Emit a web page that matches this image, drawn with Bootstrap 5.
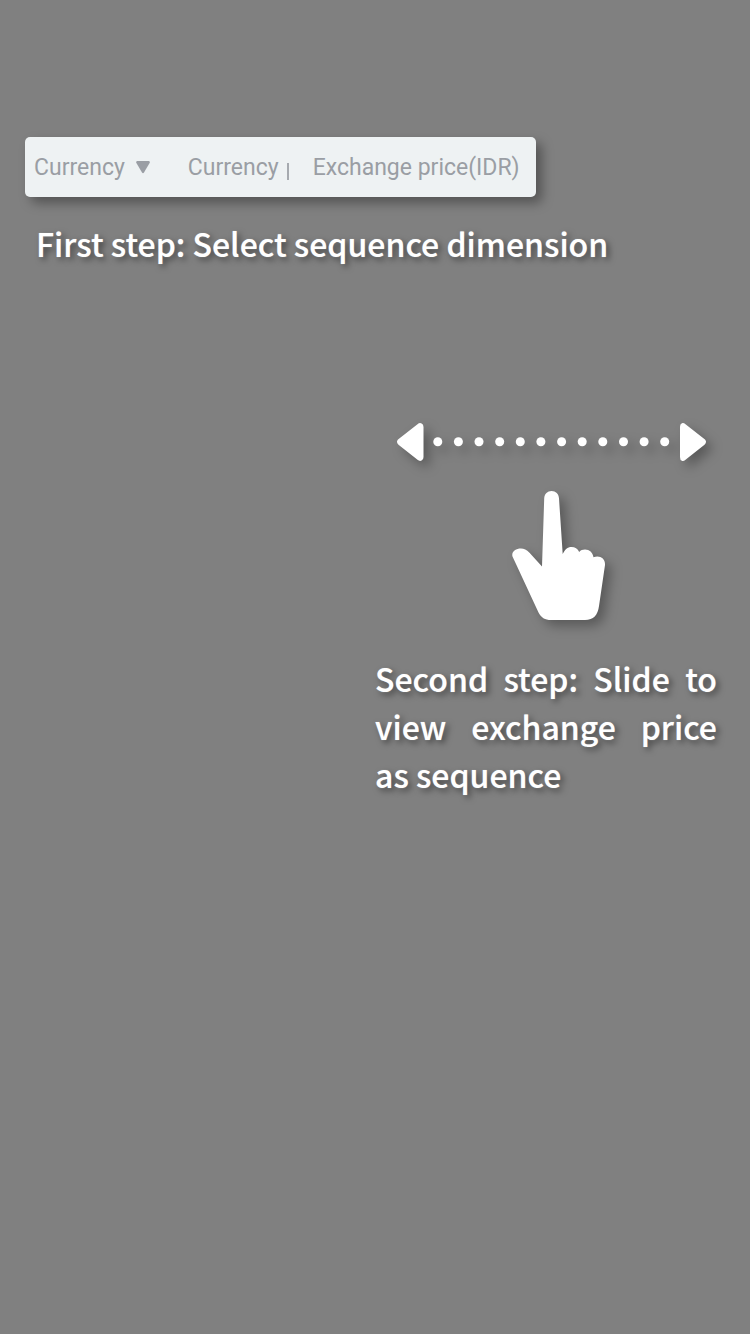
<!DOCTYPE html>
<html lang="en">
<head>
<meta charset="utf-8">
<meta name="viewport" content="width=device-width, initial-scale=1">
<title>Exchange guide</title>
<link href="https://cdn.jsdelivr.net/npm/bootstrap@5.3.0/dist/css/bootstrap.min.css" rel="stylesheet">
<style>
body { background: #808080; color: #fff; }
.guide { padding: 137px 24px 48px; }
.sort-bar { height: 60px; margin-left: 1px; padding: 2px 16px 0 9px; background: #eef2f3; border-radius: 5px; box-shadow: 6px 6px 12px rgba(0,0,0,.35); font: 23px/32px Roboto, sans-serif; color: #9a9ea4; }
.sort-btn { border: 0; padding: 0; background: none; color: inherit; gap: 11px; margin-right: 38px; }
.sort-btn svg { margin-bottom: 2px; }
.divider-line { width: 2px; height: 17px; background: #a6aaaf; margin: 6px 24px 0 8px; }
.step-text { font: 500 32px/48px "Noto Sans CJK SC", sans-serif; text-shadow: 0 0 1px rgba(255,255,255,.5), 3px 3px 6px rgba(0,0,0,.5); }
.step-one { margin: 22px 0 0 12px; }
.step-two { margin: 34px 9px 0 0; text-align: justify; }
.second { margin-top: 156px; }
.shadowed { filter: drop-shadow(6px 6px 6px rgba(0,0,0,.3)); overflow: visible; }
.slide-arrow { margin-left: 22px; }
.hand { margin: 30px 0 0 137px; }
</style>
</head>
<body>
<main class="guide">
  <section>
    <div class="sort-bar d-inline-flex align-items-center text-nowrap">
      <button type="button" class="sort-btn d-flex align-items-center">Currency
        <svg width="14" height="13" viewBox="0 0 14 13" fill="currentColor" aria-hidden="true"><path d="M1.2 0H12.8Q14.4.4 13.6 2L8 11.4Q7 13 6 11.4L.4 2Q-.4.4 1.2 0Z"/></svg>
      </button>
      <span>Currency</span>
      <span class="divider-line"></span>
      <span>Exchange price(IDR)</span>
    </div>
    <p class="step-text step-one">First step: Select sequence dimension</p>
  </section>
  <section class="row g-0 second">
    <div class="col-6 offset-6">
      <svg class="shadowed slide-arrow d-block" width="309" height="38" viewBox="0 0 309 38" fill="#fff" aria-hidden="true">
        <path d="M1 16.500L20.500 1.200Q22.500-.5 24.600.4Q26.500 1.200 26.500 4V34Q26.500 36.800 24.600 37.600Q22.500 38.500 20.500 36.800L1.500 21.700Q-1.300 19 1 16.500Z"/>
        <path d="M308 16.500L288.500 1.200Q286.500-.5 284.900.2Q283 .8 283 4V34Q283 37.200 284.900 37.800Q286.500 38.500 288.500 36.800L307.500 21.700Q310.300 19 308 16.500Z"/>
        <g><circle cx="40.800" cy="18.700" r="4.500"/><circle cx="61.400" cy="18.700" r="4.500"/><circle cx="82" cy="18.700" r="4.500"/><circle cx="102.700" cy="18.700" r="4.500"/><circle cx="123.300" cy="18.700" r="4.500"/><circle cx="143.900" cy="18.700" r="4.500"/><circle cx="164.600" cy="18.700" r="4.500"/><circle cx="185.200" cy="18.700" r="4.500"/><circle cx="205.800" cy="18.700" r="4.500"/><circle cx="226.500" cy="18.700" r="4.500"/><circle cx="247.100" cy="18.700" r="4.500"/><circle cx="267.700" cy="18.700" r="4.500"/></g>
      </svg>
      <svg class="shadowed hand d-block" width="93" height="129" viewBox="0 0 93 129" fill="#fff" aria-hidden="true">
        <path d="M32.200 7.500C32.500 2.800 35.500 0 39.500 0C43.800 0 46.700 2.800 47 7.500L50.700 63C53 58.500 55.500 56 59.500 56C63 56 65.700 57.800 67.200 61C68.800 59.200 70.500 58.500 73 58.500C77.500 58.500 80.700 61.500 81.500 66.200C88 64 93.500 67.500 93 74L87 115C85.800 124 81.500 129 73 129H39C33 129 29 126.500 26.500 121.500L.5 65.500C-.8 61 3.500 57.500 9 57.500C12 57.500 14.500 58.800 17.500 61.800L30 75.500Z"/>
      </svg>
      <p class="step-text step-two">Second step: Slide to view exchange price as sequence</p>
    </div>
  </section>
</main>
<script src="https://cdn.jsdelivr.net/npm/bootstrap@5.3.0/dist/js/bootstrap.bundle.min.js"></script>
</body>
</html>
